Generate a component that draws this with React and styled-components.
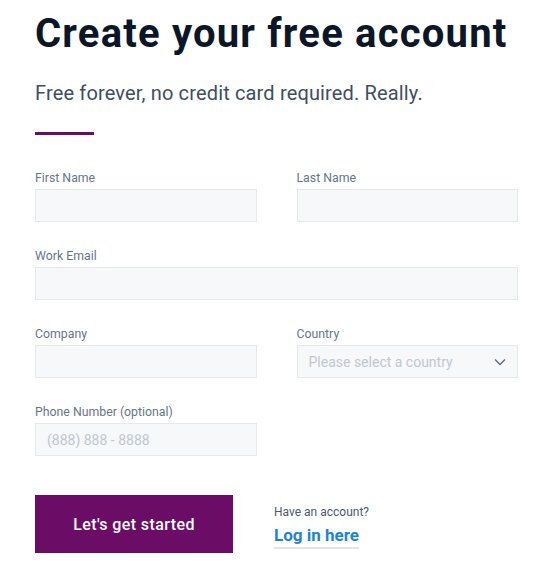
import React from 'react';
import styled, { createGlobalStyle } from 'styled-components';

const GlobalStyle = createGlobalStyle`
  body {
    margin: 0;
    background: #ffffff;
    font-family: Roboto, "Noto Sans", Arial, sans-serif;
  }
`;

const Page = styled.div`
  width: 550px;
  height: 568px;
  padding: 0 35px;
  box-sizing: border-box;
  overflow: hidden;
`;

const Title = styled.h1`
  margin: 0;
  padding-top: 10px;
  font-size: 40px;
  line-height: 48px;
  font-weight: 700;
  letter-spacing: 1.2px;
  color: #0b1729;
  white-space: nowrap;
`;

const Subtitle = styled.p`
  margin: 21px 0 0;
  font-size: 20px;
  line-height: 28px;
  letter-spacing: 0.15px;
  color: #3e4e63;
`;

const Divider = styled.div`
  width: 59px;
  height: 3px;
  margin-top: 25px;
  background: #6b0c66;
`;

const Form = styled.div`
  display: grid;
  grid-template-columns: 1fr 1fr;
  column-gap: 40px;
  row-gap: 26px;
  width: 483px;
  margin-top: 35px;
`;

const Field = styled.label`
  display: flex;
  flex-direction: column;
  gap: 3px;
  grid-column: ${p => (p.wide ? '1 / span 2' : 'auto')};
`;

const Label = styled.span`
  font-size: 12.3px;
  line-height: 16px;
  color: #66768a;
`;

const Input = styled.input`
  box-sizing: border-box;
  height: 33px;
  width: 100%;
  padding: 0 11px;
  border: 1px solid #e5e8ed;
  background: #f7f8fa;
  font-family: inherit;
  font-size: 14px;
  color: #3e4e63;
  outline: none;

  &::placeholder {
    color: #c1c7d0;
  }
`;

const SelectBox = styled.div`
  box-sizing: border-box;
  height: 33px;
  display: flex;
  align-items: center;
  justify-content: space-between;
  padding: 0 11px 0 11px;
  border: 1px solid #e5e8ed;
  background: #f7f8fa;
  font-size: 14px;
  color: #c1c7d0;
`;

const Footer = styled.div`
  display: flex;
  align-items: center;
  gap: 41px;
  margin-top: 39px;
`;

const Button = styled.button`
  width: 198px;
  height: 58px;
  border: none;
  background: #6b0c66;
  color: #ffffff;
  font-family: inherit;
  font-size: 16px;
  font-weight: 500;
  letter-spacing: 0.4px;
  cursor: pointer;
`;

const LoginBlock = styled.div`
  display: flex;
  flex-direction: column;
  align-items: flex-start;
  margin-top: 4px;
`;

const LoginHint = styled.span`
  font-size: 12px;
  line-height: 16px;
  color: #4b5a6d;
`;

const LoginLink = styled.a`
  margin-top: 4px;
  font-size: 17px;
  line-height: 22px;
  font-weight: 700;
  color: #1a84d8;
  text-decoration: none;
  border-bottom: 2px solid #e1e5eb;
  padding-bottom: 1px;
`;

const Chevron = () => (
  <svg width="12" height="8" viewBox="0 0 12 8" fill="none">
    <path d="M1 1.5l5 5 5-5" stroke="#5a6a7e" strokeWidth="1.3" />
  </svg>
);

export default function App() {
  return (
    <Page>
      <GlobalStyle />
      <Title>Create your free account</Title>
      <Subtitle>Free forever, no credit card required. Really.</Subtitle>
      <Divider />
      <Form>
        <Field>
          <Label>First Name</Label>
          <Input />
        </Field>
        <Field>
          <Label>Last Name</Label>
          <Input />
        </Field>
        <Field wide>
          <Label>Work Email</Label>
          <Input />
        </Field>
        <Field>
          <Label>Company</Label>
          <Input />
        </Field>
        <Field>
          <Label>Country</Label>
          <SelectBox>
            Please select a country
            <Chevron />
          </SelectBox>
        </Field>
        <Field>
          <Label>Phone Number (optional)</Label>
          <Input placeholder="(888) 888 - 8888" />
        </Field>
      </Form>
      <Footer>
        <Button>Let's get started</Button>
        <LoginBlock>
          <LoginHint>Have an account?</LoginHint>
          <LoginLink href="#">Log in here</LoginLink>
        </LoginBlock>
      </Footer>
    </Page>
  );
}
